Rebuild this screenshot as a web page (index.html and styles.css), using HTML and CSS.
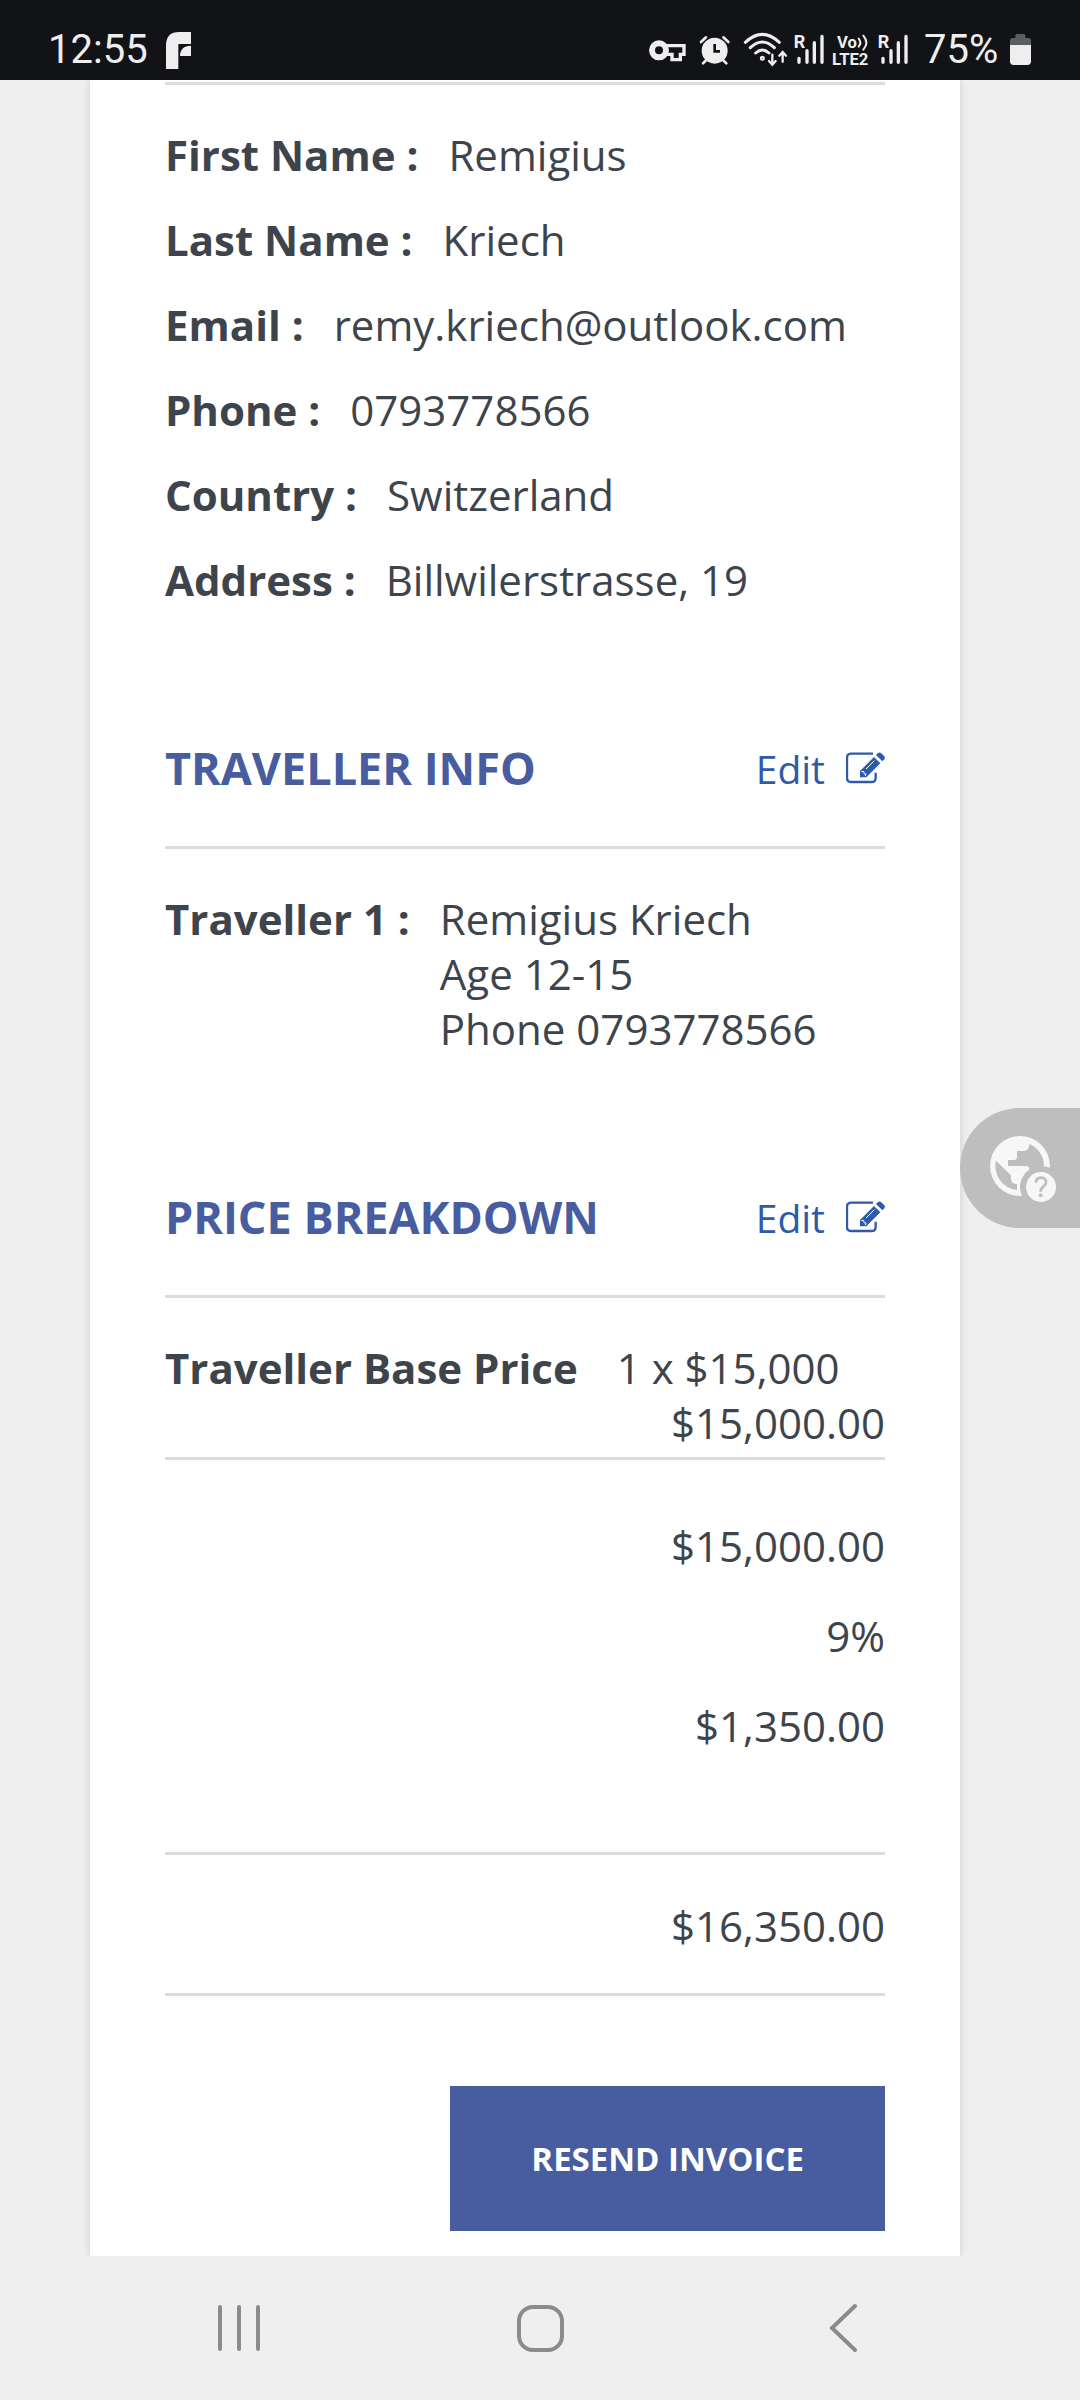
FILE: index.html
```
<!DOCTYPE html>
<html lang="en">
<head>
    <meta charset="UTF-8">
    <meta name="viewport" content="width=device-width, initial-scale=1.0">
    <title>Booking Summary</title>
    <link rel="stylesheet" href="styles.css">
</head>
<body>
    <!-- Status bar -->
    <header class="status-bar">
        <span class="clock">12:55</span>
        <svg class="app-icon" width="25" height="37" viewBox="501 96 75 111" fill="#eee">
            <path d="M501 207V136Q501 96 541 96H576V132H538V207Z"/>
            <path d="M543 168Q543 138 576 137V168Z"/>
        </svg>
        <div class="status-icons">
            <svg width="46" height="40" viewBox="51 90 138 120" fill="none" stroke="#eee" stroke-width="10">
                <circle cx="87" cy="151" r="21" stroke-width="18"/>
                <path d="M106 137H162V163H151V179H126V163H106"/>
            </svg>
            <svg width="37" height="40" viewBox="207 90 111 120">
                <circle cx="254" cy="152" r="39" fill="#eee"/>
                <path d="M213 126L228 112M295 126L280 112M229 180L219 190M279 180L289 190" stroke="#eee" stroke-width="8" stroke-linecap="round"/>
                <path d="M254 132V154H270" fill="none" stroke="#121317" stroke-width="8"/>
            </svg>
            <svg width="46" height="40" viewBox="336 90 138 120" fill="none" stroke="#eee" stroke-width="9" stroke-linecap="round">
                <path d="M346 127Q397 79 448 127M361 143Q397 109 433 143M377 159Q397 141 417 159"/>
                <circle cx="397" cy="175" r="3"/>
                <path d="M427 164V192M417 183L427 194L437 183M458 185V157M448 167L458 156L468 167" stroke-width="7"/>
            </svg>
            <svg width="32" height="40" viewBox="492 90 96 120" stroke="#eee" stroke-width="10" stroke-linecap="round">
                <path d="M507 175V187M531 152V187M553 128V187M576 109V187"/>
                <text class="roaming" x="491" y="145">R</text>
            </svg>
            <svg width="40" height="40" viewBox="606 90 120 120">
                <text class="volte" x="621" y="144">Vo</text>
                <text class="volte" x="606" y="195">LTE2</text>
                <path d="M686 116Q696 128 686 140M700 107Q718 128 700 149" fill="none" stroke="#eee" stroke-width="6" stroke-linecap="round"/>
            </svg>
            <svg width="32" height="40" viewBox="492 90 96 120" stroke="#eee" stroke-width="10" stroke-linecap="round">
                <path d="M507 175V187M531 152V187M553 128V187M576 109V187"/>
                <text class="roaming" x="491" y="145">R</text>
            </svg>
            <span class="battery-level">75%</span>
            <svg width="23" height="40" viewBox="1137 90 69 120">
                <path d="M1140 136V122Q1140 114 1148 114H1156V107Q1156 102 1161 102H1181Q1186 102 1186 107V114H1195Q1203 114 1203 122V136Z" fill="#5d5e60"/>
                <path d="M1140 135H1203V184Q1203 195 1192 195H1151Q1140 195 1140 184Z" fill="#eee"/>
            </svg>
        </div>
    </header>

    <!-- Booking summary -->
    <main class="summary">
        <section class="billing">
            <div class="row"><strong>First Name :</strong><span>Remigius</span></div>
            <div class="row"><strong>Last Name :</strong><span>Kriech</span></div>
            <div class="row"><strong>Email :</strong><span>remy.kriech@outlook.com</span></div>
            <div class="row"><strong>Phone :</strong><span>0793778566</span></div>
            <div class="row"><strong>Country :</strong><span>Switzerland</span></div>
            <div class="row"><strong>Address :</strong><span>Billwilerstrasse, 19</span></div>
        </section>

        <section>
            <div class="section-head">
                <h2>Traveller Info</h2>
                <a href="#" class="edit-link">Edit
                    <svg width="39" height="32" viewBox="348 95 117 96" fill="#2d5ba9">
                        <path d="M429 100H364Q351 100 351 113V172Q351 185 364 185H424Q437 185 437 172V157" fill="none" stroke="#2d5ba9" stroke-width="7"/>
                        <path d="M390 152L432 110L451 129L409 171H390Z"/>
                        <path d="M438 104L444 98Q448 95 453 98L463 108Q466 112 463 117L457 123Z"/>
                        <path d="M408 146L433 121M394 154L401 153L402 160L408 161L406 167" fill="none" stroke="#fff" stroke-width="3"/>
                    </svg>
                </a>
            </div>
            <div class="row">
                <strong>Traveller 1 :</strong>
                <span>Remigius Kriech<br>Age 12-15<br>Phone 0793778566</span>
            </div>
        </section>

        <section>
            <div class="section-head">
                <h2>Price Breakdown</h2>
                <a href="#" class="edit-link">Edit
                    <svg width="39" height="32" viewBox="348 95 117 96" fill="#2d5ba9">
                        <path d="M429 100H364Q351 100 351 113V172Q351 185 364 185H424Q437 185 437 172V157" fill="none" stroke="#2d5ba9" stroke-width="7"/>
                        <path d="M390 152L432 110L451 129L409 171H390Z"/>
                        <path d="M438 104L444 98Q448 95 453 98L463 108Q466 112 463 117L457 123Z"/>
                        <path d="M408 146L433 121M394 154L401 153L402 160L408 161L406 167" fill="none" stroke="#fff" stroke-width="3"/>
                    </svg>
                </a>
            </div>
            <div class="price-item">
                <div class="price-line"><strong>Traveller Base Price</strong><span>1 x $15,000</span></div>
                <div class="amount">$15,000.00</div>
            </div>
            <div class="subtotals">
                <div class="amount">$15,000.00</div>
                <div class="amount">9%</div>
                <div class="amount">$1,350.00</div>
            </div>
            <div class="total amount">$16,350.00</div>
        </section>

        <div class="actions">
            <button type="button" class="resend-button">RESEND INVOICE</button>
        </div>
    </main>

    <!-- Translate handle at the edge of the screen -->
    <button type="button" class="translate-handle" aria-label="Translate">
        <svg width="66" height="66" viewBox="180 174 198 198">
            <circle cx="270" cy="264" r="90" fill="#f7f7f7"/>
            <path d="M198 248L243 292V302Q243 318 261 318V336A72 72 0 0 1 198 248Z" fill="#bebebe"/>
            <path d="M298 198A72 72 0 0 1 342 264L298 276Q298 264 288 264H234V246H252Q261 246 261 237V219H280Q298 219 298 198Z" fill="#bebebe"/>
            <circle cx="333" cy="327" r="63" fill="#bebebe"/>
            <circle cx="333" cy="327" r="45" fill="#f7f7f7"/>
            <path d="M318 314Q318 299 333 299Q348 299 348 313Q348 320 340 326Q332 332 332 341" fill="none" stroke="#bebebe" stroke-width="8"/>
            <circle cx="332" cy="352" r="6" fill="#bebebe"/>
        </svg>
    </button>

    <!-- Navigation bar -->
    <nav class="nav-bar">
        <button type="button" aria-label="Recent apps">
            <svg width="48" height="52" viewBox="0 0 48 52" stroke="#8b8b8b" stroke-width="4" stroke-linecap="round">
                <path d="M5 5V47M24 5V47M43 5V47"/>
            </svg>
        </button>
        <button type="button" aria-label="Home">
            <svg width="52" height="52" viewBox="0 0 52 52" fill="none" stroke="#8b8b8b" stroke-width="4">
                <rect x="5" y="5" width="43" height="43" rx="14"/>
            </svg>
        </button>
        <button type="button" aria-label="Back">
            <svg width="32" height="52" viewBox="0 0 32 52" fill="none" stroke="#8b8b8b" stroke-width="4" stroke-linecap="round">
                <path d="M30 4L7 26L30 48"/>
            </svg>
        </button>
    </nav>
</body>
</html>
```
FILE: styles.css
```
* {
    box-sizing: border-box;
}
body {
    margin: 0;
    min-height: 100vh;
    display: flex;
    flex-direction: column;
    background-color: #efefef;
    color: #3e444c;
    font-family: "Open Sans", sans-serif;
    font-size: 42px;
    line-height: 55px;
    overflow-x: hidden;
}
button {
    border: none;
    padding: 0;
    cursor: pointer;
}
svg {
    display: block;
    flex-shrink: 0;
}

/* Status bar */
.status-bar {
    position: relative;
    z-index: 1;
    display: flex;
    align-items: center;
    height: 80px;
    padding: 20px 48px 0;
    background-color: #121317;
    color: #eee;
    font-family: Roboto, sans-serif;
    font-size: 40px;
    line-height: 40px;
}
.app-icon {
    margin-left: 18px;
}
.status-icons {
    display: flex;
    align-items: center;
    gap: 6px;
    margin-left: auto;
}
.battery-level {
    min-width: 87px;
    padding-left: 8px;
}
.roaming, .volte {
    fill: #eee;
    stroke: none;
    font-weight: bold;
    font-size: 54px;
}
.volte {
    font-size: 50px;
}

/* Card */
.summary {
    flex: 1;
    margin: 0 120px 0 90px;
    padding: 2px 75px 25px;
    background-color: #fff;
    box-shadow: 0 0 8px rgba(0, 0, 0, 0.14);
}
.billing {
    border-top: 3px solid #dcdcdc;
    padding-top: 42px;
}
.row {
    display: flex;
    gap: 30px;
}
.billing .row + .row {
    margin-top: 30px;
}
.section-head {
    display: flex;
    justify-content: space-between;
    align-items: center;
    margin: 131px 0 42px;
    padding-bottom: 48px;
    border-bottom: 3px solid #dcdcdc;
}
h2 {
    margin: 0;
    color: #485ca0;
    font-size: 45px;
    line-height: 60px;
    text-transform: uppercase;
}
.edit-link {
    display: flex;
    align-items: center;
    gap: 21px;
    color: #2d5ba9;
    font-size: 39px;
    text-decoration: none;
}

/* Prices */
.price-item {
    padding-bottom: 7px;
    border-bottom: 3px solid #dcdcdc;
}
.price-line {
    display: flex;
    gap: 39px;
}
.amount {
    text-align: right;
}
.subtotals {
    display: grid;
    gap: 35px;
    padding: 58px 0 99px;
    border-bottom: 3px solid #dcdcdc;
}
.total {
    padding: 43px 0 40px;
    border-bottom: 3px solid #dcdcdc;
}
.actions {
    display: flex;
    justify-content: flex-end;
    margin-top: 90px;
}
.resend-button {
    padding: 45px 81px;
    background-color: #485ca0;
    color: #fff;
    font-family: inherit;
    font-size: 33px;
    font-weight: bold;
    line-height: 55px;
}

/* Floating handle, half off the right edge */
.translate-handle {
    position: fixed;
    top: 1108px;
    right: 0;
    width: 120px;
    height: 120px;
    padding: 2px 0 0 30px;
    border-radius: 60px 0 0 60px;
    background-color: #bebebe;
}

/* Navigation bar */
.nav-bar {
    position: relative;
    display: flex;
    height: 144px;
    padding: 0 88px;
    background-color: #efefef;
}
.nav-bar button {
    flex: 1;
    display: flex;
    justify-content: center;
    align-items: center;
    background: none;
}
```
